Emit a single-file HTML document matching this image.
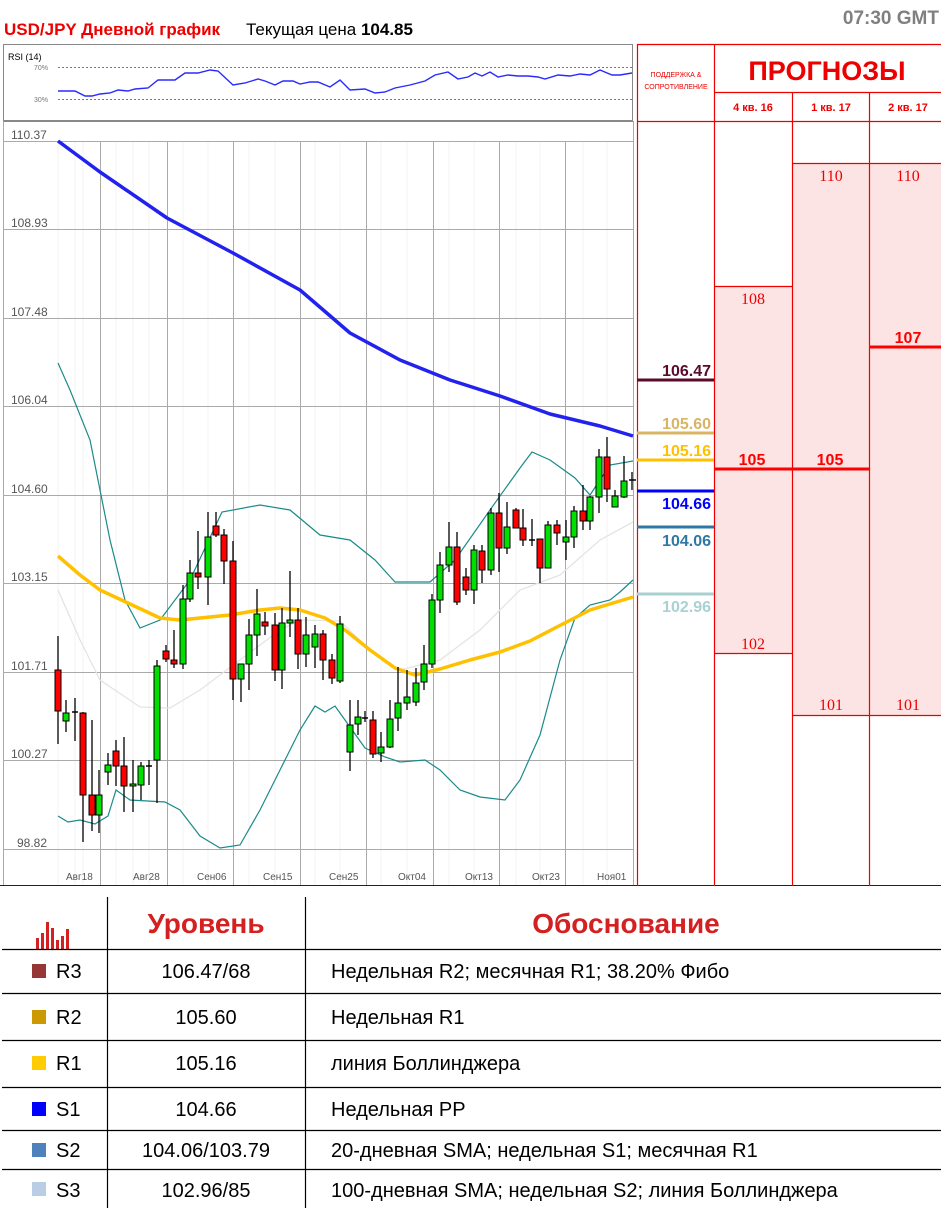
<!DOCTYPE html>
<html><head><meta charset="utf-8"><style>
html,body{margin:0;padding:0;background:#fff;width:941px;height:1208px;overflow:hidden}
svg{display:block}
.ax{font-family:"Liberation Sans",sans-serif;font-size:12px;fill:#555}
.dt{font-family:"Liberation Sans",sans-serif;font-size:10px;fill:#555}
.lv{font-family:"Liberation Sans",sans-serif;font-size:16px;font-weight:bold}
.sf{font-family:"Liberation Serif",serif;font-size:16px;fill:#e00}
.tb{font-family:"Liberation Sans Narrow","Liberation Sans",sans-serif;font-size:20px;fill:#000}
</style></head><body>
<svg width="941" height="1208" viewBox="0 0 941 1208" xmlns="http://www.w3.org/2000/svg">
<!-- header -->
<text x="4" y="35" font-family="Liberation Sans Narrow,Liberation Sans,sans-serif" font-size="17" font-weight="bold" fill="#e00">USD/JPY Дневной график</text>
<text x="246" y="35" font-family="Liberation Sans Narrow,Liberation Sans,sans-serif" font-size="17" fill="#000">Текущая цена <tspan font-weight="bold">104.85</tspan></text>
<text x="939" y="24" text-anchor="end" font-family="Liberation Sans Narrow,Liberation Sans,sans-serif" font-size="19" font-weight="bold" fill="#808080">07:30 GMT</text>

<!-- RSI -->
<rect x="3.5" y="44.5" width="629" height="76" fill="#fff" stroke="#888"/>
<text x="8" y="60" font-family="Liberation Sans,sans-serif" font-size="9" fill="#000">RSI (14)</text>
<line x1="58" y1="67.5" x2="632" y2="67.5" stroke="#777" stroke-dasharray="2,2"/>
<line x1="58" y1="99.5" x2="632" y2="99.5" stroke="#777" stroke-dasharray="2,2"/>
<text x="34" y="70" font-family="Liberation Sans,sans-serif" font-size="7" fill="#777">70%</text>
<text x="34" y="102" font-family="Liberation Sans,sans-serif" font-size="7" fill="#777">30%</text>
<polyline fill="none" stroke="#2a2aff" stroke-width="1.4" points="58,91 75,91 85,96 92,96 100,94 110,93 118,90 128,91 135,89 148,88 158,80 175,80 185,73 198,73 210,70 218,71 233,85 245,83 258,79 265,81 275,85 283,81 293,81 300,84 310,82 318,82 330,87 340,80 350,90 365,89 375,93 385,92 395,88 410,85 425,81 435,75 448,72 458,79 468,77 475,73 482,76 490,72 498,77 508,75 518,76 528,76 538,77 545,79 558,75 570,76 580,74 590,75 600,70 612,75 620,75 632,73"/>

<!-- main chart -->
<line x1="3" y1="121.5" x2="633" y2="121.5" stroke="#888"/>
<line x1="3.5" y1="121" x2="3.5" y2="886" stroke="#aaa"/>
<line x1="633.5" y1="121" x2="633.5" y2="886" stroke="#aaa"/>
<g stroke="#f3f3f3">
<line x1="58" y1="141" x2="58" y2="885"/><line x1="75" y1="141" x2="75" y2="885"/><line x1="83" y1="141" x2="83" y2="885"/><line x1="116" y1="141" x2="116" y2="885"/><line x1="133" y1="141" x2="133" y2="885"/><line x1="149" y1="141" x2="149" y2="885"/><line x1="183" y1="141" x2="183" y2="885"/><line x1="208" y1="141" x2="208" y2="885"/><line x1="249" y1="141" x2="249" y2="885"/><line x1="275" y1="141" x2="275" y2="885"/><line x1="315" y1="141" x2="315" y2="885"/><line x1="340" y1="141" x2="340" y2="885"/><line x1="381" y1="141" x2="381" y2="885"/><line x1="407" y1="141" x2="407" y2="885"/><line x1="449" y1="141" x2="449" y2="885"/><line x1="474" y1="141" x2="474" y2="885"/><line x1="516" y1="141" x2="516" y2="885"/><line x1="540" y1="141" x2="540" y2="885"/><line x1="583" y1="141" x2="583" y2="885"/><line x1="607" y1="141" x2="607" y2="885"/>
</g>
<g stroke="#aaa">
<line x1="3" y1="141.5" x2="633" y2="141.5"/><line x1="3" y1="229.5" x2="633" y2="229.5"/><line x1="3" y1="318.5" x2="633" y2="318.5"/><line x1="3" y1="406.5" x2="633" y2="406.5"/><line x1="3" y1="495.5" x2="633" y2="495.5"/><line x1="3" y1="583.5" x2="633" y2="583.5"/><line x1="3" y1="672.5" x2="633" y2="672.5"/><line x1="3" y1="760.5" x2="633" y2="760.5"/><line x1="3" y1="849.5" x2="633" y2="849.5"/>
<line x1="100.5" y1="141" x2="100.5" y2="885"/><line x1="167.5" y1="141" x2="167.5" y2="885"/><line x1="233.5" y1="141" x2="233.5" y2="885"/><line x1="300.5" y1="141" x2="300.5" y2="885"/><line x1="366.5" y1="141" x2="366.5" y2="885"/><line x1="433.5" y1="141" x2="433.5" y2="885"/><line x1="499.5" y1="141" x2="499.5" y2="885"/><line x1="565.5" y1="141" x2="565.5" y2="885"/>
</g>
<g class="ax">
<text x="11" y="139">110.37</text><text x="11" y="227">108.93</text><text x="11" y="316">107.48</text><text x="11" y="404">106.04</text><text x="11" y="493">104.60</text><text x="11" y="581">103.15</text><text x="11" y="670">101.71</text><text x="11" y="758">100.27</text><text x="17" y="847">98.82</text>
</g>
<g class="dt">
<text x="66" y="880">Авг18</text><text x="133" y="880">Авг28</text><text x="197" y="880">Сен06</text><text x="263" y="880">Сен15</text><text x="329" y="880">Сен25</text><text x="398" y="880">Окт04</text><text x="465" y="880">Окт13</text><text x="532" y="880">Окт23</text><text x="597" y="880">Ноя01</text>
</g>
<line x1="0" y1="885.5" x2="941" y2="885.5" stroke="#222"/>

<!-- indicator lines -->
<polyline fill="none" stroke="#e4e4e4" stroke-width="1.3" points="58,590 80,640 100,680 140,707 170,708 200,690 240,660 280,630 300,620 340,621 370,650 400,670 440,660 480,630 520,590 560,575 600,540 633,522"/>
<polyline fill="none" stroke="#1a8a8a" stroke-width="1.2" points="58,363 70,390 90,440 110,540 125,600 140,628 160,620 190,580 222,512 260,505 290,510 320,535 350,540 375,560 395,582 430,582 455,560 490,510 520,468 532,452 550,460 575,478 590,495 600,480 610,465 633,461"/>
<polyline fill="none" stroke="#1a8a8a" stroke-width="1.2" points="58,816 68,822 80,820 95,824 108,816 116,790 130,800 165,802 180,810 200,836 220,848 240,845 260,810 280,770 300,730 315,706 325,712 335,706 345,720 365,748 385,757 400,762 425,760 440,770 460,790 480,797 505,800 520,780 540,735 560,660 575,618 590,605 610,600 620,592 633,580"/>
<polyline fill="none" stroke="#ffc000" stroke-width="3.5" stroke-linejoin="round" points="58,556 80,575 100,590 130,604 160,618 180,620 230,615 260,610 280,608 300,610 325,618 345,630 370,650 395,668 415,675 440,669 470,660 500,652 530,641 555,628 590,610 633,597"/>
<polyline fill="none" stroke="#2222ee" stroke-width="3.5" stroke-linejoin="round" points="58,141 100,172 167,218 233,253 300,290 350,333 400,360 450,380 500,396 550,414 600,426 633,436"/>

<!-- candles -->
<g stroke="#000" stroke-width="1.3">
<line x1="58" y1="636" x2="58" y2="744"/><line x1="66" y1="700" x2="66" y2="732"/><line x1="75" y1="698" x2="75" y2="741"/><line x1="83" y1="712" x2="83" y2="842"/><line x1="92" y1="720" x2="92" y2="831"/><line x1="99" y1="770" x2="99" y2="833"/><line x1="108" y1="753" x2="108" y2="785"/><line x1="116" y1="740" x2="116" y2="786"/><line x1="124" y1="737" x2="124" y2="812"/><line x1="133" y1="760" x2="133" y2="812"/><line x1="141" y1="762" x2="141" y2="800"/><line x1="149" y1="760" x2="149" y2="785"/><line x1="157" y1="660" x2="157" y2="803"/><line x1="166" y1="645" x2="166" y2="662"/><line x1="174" y1="630" x2="174" y2="668"/><line x1="183" y1="585" x2="183" y2="669"/><line x1="190" y1="560" x2="190" y2="602"/><line x1="198" y1="531" x2="198" y2="589"/><line x1="208" y1="512" x2="208" y2="605"/><line x1="216" y1="512" x2="216" y2="537"/><line x1="224" y1="529" x2="224" y2="584"/><line x1="233" y1="541" x2="233" y2="700"/><line x1="241" y1="664" x2="241" y2="702"/><line x1="249" y1="619" x2="249" y2="690"/><line x1="257" y1="589" x2="257" y2="656"/><line x1="265" y1="612" x2="265" y2="635"/><line x1="275" y1="613" x2="275" y2="681"/><line x1="282" y1="608" x2="282" y2="689"/><line x1="290" y1="571" x2="290" y2="637"/><line x1="298" y1="608" x2="298" y2="669"/><line x1="306" y1="617" x2="306" y2="667"/><line x1="315" y1="625" x2="315" y2="668"/><line x1="323" y1="630" x2="323" y2="680"/><line x1="332" y1="654" x2="332" y2="684"/><line x1="340" y1="616" x2="340" y2="683"/><line x1="350" y1="700" x2="350" y2="771"/><line x1="358" y1="700" x2="358" y2="735"/><line x1="365" y1="711" x2="365" y2="722"/><line x1="373" y1="711" x2="373" y2="758"/><line x1="381" y1="732" x2="381" y2="762"/><line x1="390" y1="700" x2="390" y2="748"/><line x1="398" y1="667" x2="398" y2="731"/><line x1="407" y1="670" x2="407" y2="710"/><line x1="416" y1="668" x2="416" y2="706"/><line x1="424" y1="645" x2="424" y2="690"/><line x1="432" y1="594" x2="432" y2="668"/><line x1="440" y1="552" x2="440" y2="613"/><line x1="449" y1="522" x2="449" y2="572"/><line x1="457" y1="532" x2="457" y2="605"/><line x1="466" y1="568" x2="466" y2="595"/><line x1="474" y1="545" x2="474" y2="604"/><line x1="482" y1="545" x2="482" y2="583"/><line x1="491" y1="508" x2="491" y2="575"/><line x1="499" y1="493" x2="499" y2="572"/><line x1="507" y1="502" x2="507" y2="554"/><line x1="516" y1="508" x2="516" y2="528"/><line x1="523" y1="509" x2="523" y2="546"/><line x1="532" y1="519" x2="532" y2="546"/><line x1="540" y1="539" x2="540" y2="583"/><line x1="548" y1="521" x2="548" y2="568"/><line x1="557" y1="520" x2="557" y2="545"/><line x1="566" y1="520" x2="566" y2="560"/><line x1="574" y1="506" x2="574" y2="548"/><line x1="583" y1="485" x2="583" y2="530"/><line x1="590" y1="496" x2="590" y2="530"/><line x1="599" y1="449" x2="599" y2="513"/><line x1="607" y1="437" x2="607" y2="502"/><line x1="615" y1="490" x2="615" y2="507"/><line x1="624" y1="456" x2="624" y2="498"/><line x1="632" y1="472" x2="632" y2="490"/>
</g>
<g stroke="#000" stroke-width="1">
<g fill="#f00">
<rect x="55" y="670" width="6" height="41"/><rect x="80" y="713" width="6" height="82"/><rect x="89" y="795" width="6" height="20"/><rect x="113" y="751" width="6" height="15"/><rect x="121" y="766" width="6" height="20"/><rect x="163" y="651" width="6" height="8"/><rect x="171" y="660" width="6" height="4"/><rect x="195" y="573" width="6" height="4"/><rect x="213" y="526" width="6" height="9"/><rect x="221" y="535" width="6" height="26"/><rect x="230" y="561" width="6" height="118"/><rect x="262" y="622" width="6" height="4"/><rect x="272" y="625" width="6" height="45"/><rect x="295" y="620" width="6" height="34"/><rect x="320" y="634" width="6" height="26"/><rect x="329" y="660" width="6" height="18"/><rect x="370" y="720" width="6" height="34"/><rect x="454" y="547" width="6" height="55"/><rect x="463" y="577" width="6" height="13"/><rect x="479" y="551" width="6" height="19"/><rect x="496" y="513" width="6" height="35"/><rect x="513" y="510" width="6" height="18"/><rect x="520" y="528" width="6" height="12"/><rect x="537" y="539" width="6" height="29"/><rect x="554" y="525" width="6" height="8"/><rect x="580" y="511" width="6" height="10"/><rect x="604" y="457" width="6" height="32"/>
</g>
<g fill="#00e000">
<rect x="63" y="713" width="6" height="8"/><rect x="96" y="795" width="6" height="20"/><rect x="105" y="765" width="6" height="7"/><rect x="130" y="784" width="6" height="2"/><rect x="138" y="766" width="6" height="19"/><rect x="154" y="666" width="6" height="94"/><rect x="180" y="599" width="6" height="65"/><rect x="187" y="573" width="6" height="26"/><rect x="205" y="537" width="6" height="40"/><rect x="238" y="664" width="6" height="15"/><rect x="246" y="635" width="6" height="29"/><rect x="254" y="614" width="6" height="21"/><rect x="279" y="623" width="6" height="47"/><rect x="287" y="620" width="6" height="3"/><rect x="303" y="635" width="6" height="19"/><rect x="312" y="634" width="6" height="13"/><rect x="337" y="624" width="6" height="57"/><rect x="347" y="725" width="6" height="27"/><rect x="355" y="717" width="6" height="7"/><rect x="378" y="747" width="6" height="6"/><rect x="387" y="719" width="6" height="28"/><rect x="395" y="703" width="6" height="15"/><rect x="404" y="697" width="6" height="6"/><rect x="413" y="683" width="6" height="19"/><rect x="421" y="664" width="6" height="18"/><rect x="429" y="600" width="6" height="64"/><rect x="437" y="565" width="6" height="35"/><rect x="446" y="547" width="6" height="18"/><rect x="471" y="550" width="6" height="40"/><rect x="488" y="513" width="6" height="57"/><rect x="504" y="527" width="6" height="21"/><rect x="545" y="525" width="6" height="43"/><rect x="563" y="537" width="6" height="5"/><rect x="571" y="511" width="6" height="26"/><rect x="587" y="497" width="6" height="24"/><rect x="596" y="457" width="6" height="40"/><rect x="612" y="496" width="6" height="11"/><rect x="621" y="481" width="6" height="16"/>
</g>
<g stroke-width="1.5"><line x1="72" y1="712" x2="78" y2="712"/><line x1="146" y1="766" x2="152" y2="766"/><line x1="362" y1="718" x2="368" y2="718"/><line x1="529" y1="540" x2="535" y2="540"/><line x1="629" y1="480" x2="636" y2="480"/></g>
</g>

<!-- right panel -->
<rect x="714" y="286" width="78" height="367" fill="#fde4e4"/>
<rect x="792" y="163" width="149" height="552" fill="#fde4e4"/>
<g stroke="#e00" stroke-width="1.2">
<line x1="637.5" y1="44" x2="637.5" y2="886"/>
<line x1="637" y1="44.5" x2="941" y2="44.5"/>
<line x1="714.5" y1="44" x2="714.5" y2="886"/>
<line x1="792.5" y1="92" x2="792.5" y2="886"/>
<line x1="869.5" y1="92" x2="869.5" y2="886"/>
<line x1="714" y1="92.5" x2="941" y2="92.5"/>
<line x1="637" y1="121.5" x2="941" y2="121.5"/>
<line x1="792" y1="163.5" x2="941" y2="163.5"/>
<line x1="714" y1="286.5" x2="792" y2="286.5"/>
<line x1="714" y1="653.5" x2="792" y2="653.5"/>
<line x1="792" y1="715.5" x2="941" y2="715.5"/>
</g>
<text x="827" y="80" text-anchor="middle" font-family="Liberation Sans Narrow,Liberation Sans,sans-serif" font-size="27" font-weight="bold" fill="#e00">ПРОГНОЗЫ</text>
<text x="676" y="77" text-anchor="middle" font-family="Liberation Sans,sans-serif" font-size="7" fill="#e00">ПОДДЕРЖКА &amp;</text>
<text x="676" y="89" text-anchor="middle" font-family="Liberation Sans,sans-serif" font-size="7" fill="#e00">СОПРОТИВЛЕНИЕ</text>
<g font-family="Liberation Sans,sans-serif" font-size="11" font-weight="bold" fill="#e00" text-anchor="middle">
<text x="753" y="111">4 кв. 16</text><text x="831" y="111">1 кв. 17</text><text x="908" y="111">2 кв. 17</text>
</g>
<g class="sf" text-anchor="middle">
<text x="753" y="304">108</text><text x="753" y="649">102</text>
<text x="831" y="181">110</text><text x="908" y="181">110</text>
<text x="831" y="710">101</text><text x="908" y="710">101</text>
</g>
<line x1="714" y1="469" x2="869" y2="469" stroke="#f00" stroke-width="3"/>
<line x1="869" y1="347" x2="941" y2="347" stroke="#f00" stroke-width="3"/>
<g class="lv" fill="#f00" text-anchor="middle">
<text x="752" y="465">105</text><text x="830" y="465">105</text><text x="908" y="343">107</text>
</g>
<line x1="637" y1="380" x2="714" y2="380" stroke="#5a0a2a" stroke-width="3"/>
<line x1="637" y1="433" x2="714" y2="433" stroke="#d9b464" stroke-width="3"/>
<line x1="637" y1="460" x2="714" y2="460" stroke="#ffc000" stroke-width="3"/>
<line x1="637" y1="491" x2="714" y2="491" stroke="#0000ff" stroke-width="3"/>
<line x1="637" y1="527" x2="714" y2="527" stroke="#2e78a6" stroke-width="3"/>
<line x1="637" y1="594" x2="714" y2="594" stroke="#a8d2d2" stroke-width="3"/>
<g class="lv" text-anchor="end">
<text x="711" y="376" fill="#5a0a2a">106.47</text>
<text x="711" y="429" fill="#d9b464">105.60</text>
<text x="711" y="456" fill="#ffc000">105.16</text>
<text x="711" y="509" fill="#0000ff">104.66</text>
<text x="711" y="546" fill="#2e78a6">104.06</text>
<text x="711" y="612" fill="#a8d2d2">102.96</text>
</g>

<!-- table -->
<g fill="#d42020">
<rect x="36" y="938" width="3" height="12"/><rect x="41" y="933" width="3" height="17"/><rect x="46" y="922" width="3" height="28"/><rect x="51" y="928" width="3" height="22"/><rect x="56" y="940" width="3" height="10"/><rect x="61" y="936" width="3" height="14"/><rect x="66" y="929" width="3" height="21"/>
</g>
<text x="206" y="933" text-anchor="middle" font-family="Liberation Sans,sans-serif" font-size="28" font-weight="bold" fill="#d42020">Уровень</text>
<text x="626" y="933" text-anchor="middle" font-family="Liberation Sans,sans-serif" font-size="28" font-weight="bold" fill="#d42020">Обоснование</text>
<g stroke="#000" stroke-width="1.2">
<line x1="107.5" y1="897" x2="107.5" y2="1208"/><line x1="305.5" y1="897" x2="305.5" y2="1208"/>
<line x1="2" y1="949.5" x2="941" y2="949.5"/><line x1="2" y1="993.5" x2="941" y2="993.5"/><line x1="2" y1="1040.5" x2="941" y2="1040.5"/><line x1="2" y1="1087.5" x2="941" y2="1087.5"/><line x1="2" y1="1130.5" x2="941" y2="1130.5"/><line x1="2" y1="1169.5" x2="941" y2="1169.5"/>
</g>
<rect x="32" y="964" width="14" height="14" fill="#953735"/>
<rect x="32" y="1010" width="14" height="14" fill="#cc9900"/>
<rect x="32" y="1056" width="14" height="14" fill="#ffcc00"/>
<rect x="32" y="1102" width="14" height="14" fill="#0000ff"/>
<rect x="32" y="1143" width="14" height="14" fill="#4f81bd"/>
<rect x="32" y="1182" width="14" height="14" fill="#b9cde5"/>
<g class="tb">
<text x="56" y="978">R3</text><text x="56" y="1024">R2</text><text x="56" y="1070">R1</text><text x="56" y="1116">S1</text><text x="56" y="1157">S2</text><text x="56" y="1197">S3</text>
</g>
<g class="tb" text-anchor="middle">
<text x="206" y="978">106.47/68</text><text x="206" y="1024">105.60</text><text x="206" y="1070">105.16</text><text x="206" y="1116">104.66</text><text x="206" y="1157">104.06/103.79</text><text x="206" y="1197">102.96/85</text>
</g>
<g class="tb">
<text x="331" y="978">Недельная R2; месячная R1; 38.20% Фибо</text>
<text x="331" y="1024">Недельная R1</text>
<text x="331" y="1070">линия Боллинджера</text>
<text x="331" y="1116">Недельная PP</text>
<text x="331" y="1157">20-дневная SMA; недельная S1; месячная R1</text>
<text x="331" y="1197">100-дневная SMA; недельная S2; линия Боллинджера</text>
</g>
</svg>
</body></html>
